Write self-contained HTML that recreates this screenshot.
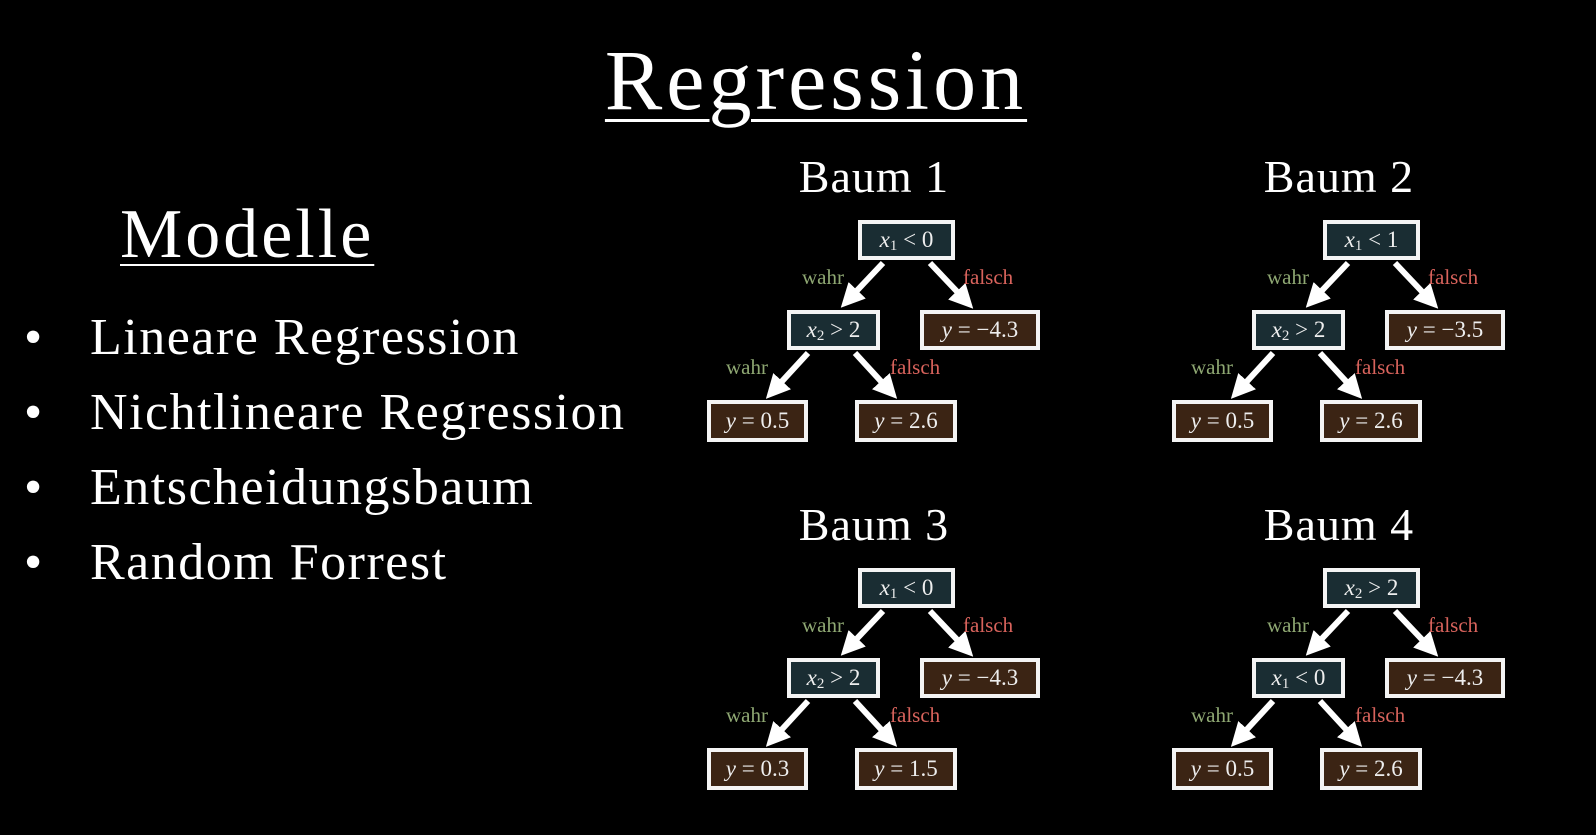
<!DOCTYPE html>
<html><head><meta charset="utf-8"><style>
body{margin:0;background:#000;width:1596px;height:835px;overflow:hidden;position:relative;font-family:"Liberation Serif",serif;color:#fff}
.a{position:absolute;white-space:nowrap}
.t{position:absolute;width:340px;height:230px}
.b{position:absolute;box-sizing:border-box;border:4px solid #f4f4f4;display:flex;align-items:center;justify-content:center;font-size:23px;font-style:italic;color:#eee;white-space:pre}
.d{background:#1a2d33}.r{background:#3b2414}
.b span{font-style:normal}
.b i{font-size:15px;font-style:normal;position:relative;top:6px}
.w{position:absolute;color:#8ea772;font-size:21px}
.f{position:absolute;color:#d8635c;font-size:21px}
svg{position:absolute;left:0;top:0}
</style></head><body>
<div class="a" style="left:0;width:1632px;text-align:center;top:30px;font-size:86px;letter-spacing:4px;text-decoration:underline;text-decoration-thickness:3px;text-underline-offset:10px">Regression</div>
<div class="a" style="left:120px;top:195px;font-size:70px;letter-spacing:3px;text-decoration:underline;text-decoration-thickness:2px;text-underline-offset:7px">Modelle</div>
<div class="a" style="left:24px;top:300px;font-size:52px;line-height:75px;letter-spacing:1.5px">
<div><span style="display:inline-block;width:66px">•</span>Lineare Regression</div>
<div><span style="display:inline-block;width:66px">•</span>Nichtlineare Regression</div>
<div><span style="display:inline-block;width:66px">•</span>Entscheidungsbaum</div>
<div><span style="display:inline-block;width:66px">•</span>Random Forrest</div>
</div>
<div class="a" style="left:774px;width:200px;text-align:center;top:150px;font-size:46px;letter-spacing:1px">Baum 1</div>
<div class="a" style="left:1239px;width:200px;text-align:center;top:150px;font-size:46px;letter-spacing:1px">Baum 2</div>
<div class="a" style="left:774px;width:200px;text-align:center;top:498px;font-size:46px;letter-spacing:1px">Baum 3</div>
<div class="a" style="left:1239px;width:200px;text-align:center;top:498px;font-size:46px;letter-spacing:1px">Baum 4</div>

<div class="t" style="left:707px;top:220px">
<svg width="340" height="230"><defs><marker id="m" markerWidth="4" markerHeight="4" refX="2" refY="2" orient="auto"><path d="M0,0 L4,2 L0,4 Z" fill="#fff"/></marker></defs>
<g stroke="#fff" stroke-width="6" marker-end="url(#m)"><line x1="176" y1="43" x2="142" y2="79"/><line x1="223" y1="43" x2="258" y2="80"/><line x1="101" y1="133" x2="67" y2="170"/><line x1="148" y1="133" x2="182" y2="170"/></g></svg>
<div class="b d" style="left:151px;top:0;width:97px;height:40px">x<i>1</i><span> &lt; 0</span></div>
<div class="b d" style="left:80px;top:90px;width:93px;height:40px">x<i>2</i><span> &gt; 2</span></div>
<div class="b r" style="left:213px;top:90px;width:120px;height:40px">y<span> = −4.3</span></div>
<div class="b r" style="left:0;top:180px;width:101px;height:42px">y<span> = 0.5</span></div>
<div class="b r" style="left:148px;top:180px;width:102px;height:42px">y<span> = 2.6</span></div>
<div class="w" style="left:95px;top:45px">wahr</div><div class="f" style="left:256px;top:45px">falsch</div>
<div class="w" style="left:19px;top:135px">wahr</div><div class="f" style="left:183px;top:135px">falsch</div>
</div>

<div class="t" style="left:1172px;top:220px">
<svg width="340" height="230"><g stroke="#fff" stroke-width="6" marker-end="url(#m)"><line x1="176" y1="43" x2="142" y2="79"/><line x1="223" y1="43" x2="258" y2="80"/><line x1="101" y1="133" x2="67" y2="170"/><line x1="148" y1="133" x2="182" y2="170"/></g></svg>
<div class="b d" style="left:151px;top:0;width:97px;height:40px">x<i>1</i><span> &lt; 1</span></div>
<div class="b d" style="left:80px;top:90px;width:93px;height:40px">x<i>2</i><span> &gt; 2</span></div>
<div class="b r" style="left:213px;top:90px;width:120px;height:40px">y<span> = −3.5</span></div>
<div class="b r" style="left:0;top:180px;width:101px;height:42px">y<span> = 0.5</span></div>
<div class="b r" style="left:148px;top:180px;width:102px;height:42px">y<span> = 2.6</span></div>
<div class="w" style="left:95px;top:45px">wahr</div><div class="f" style="left:256px;top:45px">falsch</div>
<div class="w" style="left:19px;top:135px">wahr</div><div class="f" style="left:183px;top:135px">falsch</div>
</div>

<div class="t" style="left:707px;top:568px">
<svg width="340" height="230"><g stroke="#fff" stroke-width="6" marker-end="url(#m)"><line x1="176" y1="43" x2="142" y2="79"/><line x1="223" y1="43" x2="258" y2="80"/><line x1="101" y1="133" x2="67" y2="170"/><line x1="148" y1="133" x2="182" y2="170"/></g></svg>
<div class="b d" style="left:151px;top:0;width:97px;height:40px">x<i>1</i><span> &lt; 0</span></div>
<div class="b d" style="left:80px;top:90px;width:93px;height:40px">x<i>2</i><span> &gt; 2</span></div>
<div class="b r" style="left:213px;top:90px;width:120px;height:40px">y<span> = −4.3</span></div>
<div class="b r" style="left:0;top:180px;width:101px;height:42px">y<span> = 0.3</span></div>
<div class="b r" style="left:148px;top:180px;width:102px;height:42px">y<span> = 1.5</span></div>
<div class="w" style="left:95px;top:45px">wahr</div><div class="f" style="left:256px;top:45px">falsch</div>
<div class="w" style="left:19px;top:135px">wahr</div><div class="f" style="left:183px;top:135px">falsch</div>
</div>

<div class="t" style="left:1172px;top:568px">
<svg width="340" height="230"><g stroke="#fff" stroke-width="6" marker-end="url(#m)"><line x1="176" y1="43" x2="142" y2="79"/><line x1="223" y1="43" x2="258" y2="80"/><line x1="101" y1="133" x2="67" y2="170"/><line x1="148" y1="133" x2="182" y2="170"/></g></svg>
<div class="b d" style="left:151px;top:0;width:97px;height:40px">x<i>2</i><span> &gt; 2</span></div>
<div class="b d" style="left:80px;top:90px;width:93px;height:40px">x<i>1</i><span> &lt; 0</span></div>
<div class="b r" style="left:213px;top:90px;width:120px;height:40px">y<span> = −4.3</span></div>
<div class="b r" style="left:0;top:180px;width:101px;height:42px">y<span> = 0.5</span></div>
<div class="b r" style="left:148px;top:180px;width:102px;height:42px">y<span> = 2.6</span></div>
<div class="w" style="left:95px;top:45px">wahr</div><div class="f" style="left:256px;top:45px">falsch</div>
<div class="w" style="left:19px;top:135px">wahr</div><div class="f" style="left:183px;top:135px">falsch</div>
</div>
</body></html>
